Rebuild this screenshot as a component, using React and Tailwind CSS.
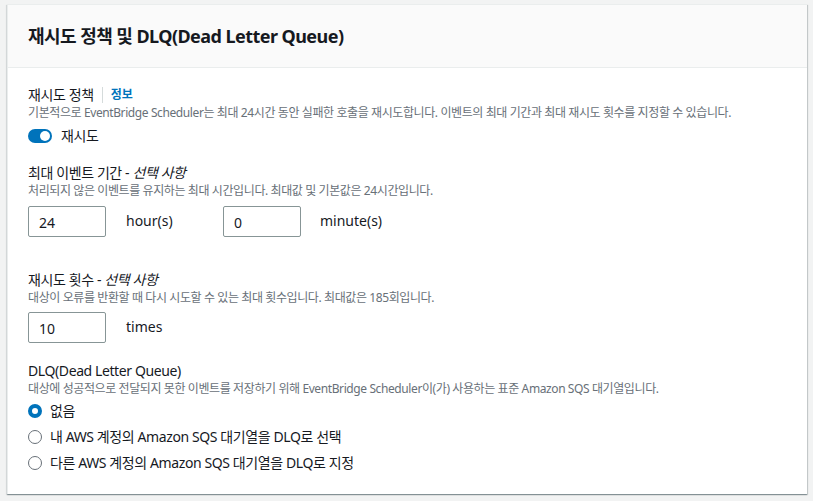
import React from "react";

const font = { fontFamily: '"Noto Sans", "Noto Sans CJK KR", sans-serif' };

function Label({ children }) {
  return <div className="text-[14px] leading-[20px] text-[#16191f] tracking-[-0.4px]">{children}</div>;
}
function Desc({ children }) {
  return <div className="text-[12px] leading-[16px] text-[#687078] tracking-[-0.4px]">{children}</div>;
}
function Input({ value }) {
  return (
    <div className="w-[78px] h-[31px] border border-[#879596] rounded-[2px] bg-white flex items-center pl-[10px] pt-[2px] text-[14px] text-[#16191f]">
      {value}
    </div>
  );
}
function Radio({ checked, children }) {
  return (
    <div className="flex items-center h-[26px] gap-[8px]">
      {checked ? (
        <span className="w-[14px] h-[14px] rounded-full border-[4px] border-[#0073bb] bg-white box-border" />
      ) : (
        <span className="w-[14px] h-[14px] rounded-full border-[1.5px] border-[#687078] bg-white box-border" />
      )}
      <span className="text-[14px] leading-[20px] text-[#16191f] tracking-[-0.4px]">{children}</span>
    </div>
  );
}

export default function App() {
  return (
    <div className="w-[813px] h-[501px] bg-[#f2f3f3] pt-[4px] pl-[7px]" style={font}>
      <div className="w-[800px] h-[490px] bg-white shadow-[0_1px_1px_0_rgba(0,28,36,0.3),1px_1px_1px_0_rgba(0,28,36,0.15),-1px_1px_1px_0_rgba(0,28,36,0.08)] border-t border-l border-[#eaeded] flex flex-col">
        <div className="h-[63px] bg-[#fafafa] border-b border-[#eaeded] flex items-center px-[20px]">
          <div className="text-[18px] font-bold text-[#16191f] leading-[24px] tracking-[-0.55px]">재시도 정책 및 DLQ(Dead Letter Queue)</div>
        </div>
        <div className="px-[20px] pt-[17px] flex flex-col">
          <div className="flex items-center">
            <Label>재시도 정책</Label>
            <span className="mx-[8px] w-px h-[16px] bg-[#d5dbdb]" />
            <span className="text-[12px] font-bold text-[#0073bb] leading-[20px]">정보</span>
          </div>
          <Desc>기본적으로 EventBridge Scheduler는 최대 24시간 동안 실패한 호출을 재시도합니다. 이벤트의 최대 기간과 최대 재시도 횟수를 지정할 수 있습니다.</Desc>
          <div className="flex items-center h-[20px] mt-[5px] gap-[9px]">
            <span className="w-[24px] h-[14px] rounded-full bg-[#0073bb] flex items-center justify-end pr-[2px]">
              <span className="w-[10px] h-[10px] rounded-full bg-white" />
            </span>
            <span className="text-[14px] leading-[20px] text-[#16191f] tracking-[-0.4px]">재시도</span>
          </div>

          <div className="mt-[17px]">
            <Label>
              최대 이벤트 기간 - <i>선택 사항</i>
            </Label>
          </div>
          <Desc>처리되지 않은 이벤트를 유지하는 최대 시간입니다. 최대값 및 기본값은 24시간입니다.</Desc>
          <div className="flex items-center mt-[7px]">
            <Input value="24" />
            <span className="ml-[20px] w-[97px] text-[14px] text-[#16191f] pb-[3px]">hour(s)</span>
            <Input value="0" />
            <span className="ml-[19px] text-[14px] text-[#16191f] pb-[3px]">minute(s)</span>
          </div>

          <div className="mt-[33px]">
            <Label>
              재시도 횟수 - <i>선택 사항</i>
            </Label>
          </div>
          <Desc>대상이 오류를 반환할 때 다시 시도할 수 있는 최대 횟수입니다. 최대값은 185회입니다.</Desc>
          <div className="flex items-center mt-[6px]">
            <Input value="10" />
            <span className="ml-[20px] text-[14px] text-[#16191f] pb-[3px]">times</span>
          </div>

          <div className="mt-[18px]">
            <Label>DLQ(Dead Letter Queue)</Label>
          </div>
          <Desc>대상에 성공적으로 전달되지 못한 이벤트를 저장하기 위해 EventBridge Scheduler이(가) 사용하는 표준 Amazon SQS 대기열입니다.</Desc>
          <div className="flex flex-col mt-[1px]">
            <Radio checked>없음</Radio>
            <Radio>내 AWS 계정의 Amazon SQS 대기열을 DLQ로 선택</Radio>
            <Radio>다른 AWS 계정의 Amazon SQS 대기열을 DLQ로 지정</Radio>
          </div>
        </div>
      </div>
    </div>
  );
}
